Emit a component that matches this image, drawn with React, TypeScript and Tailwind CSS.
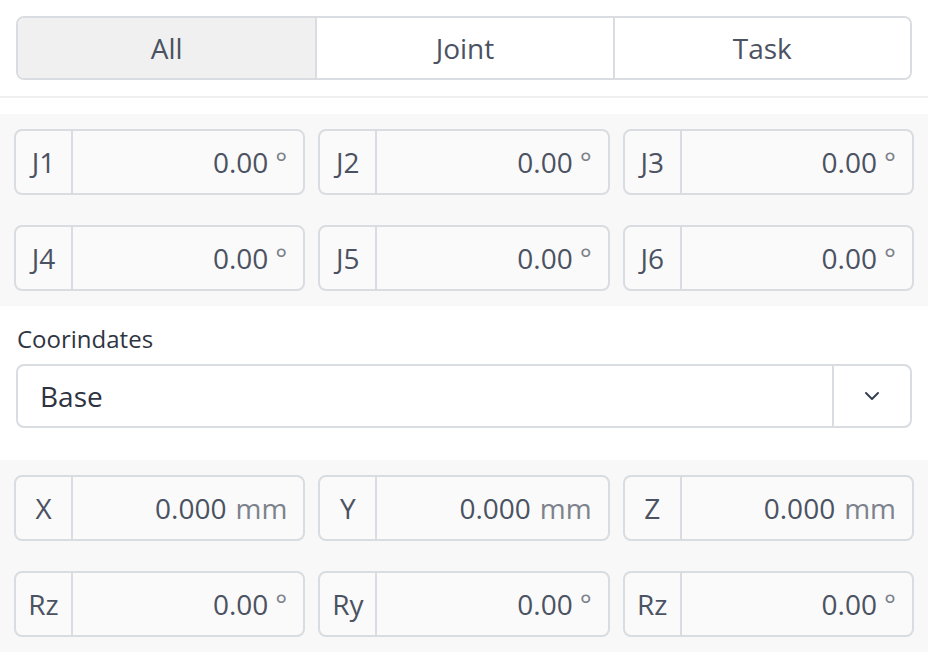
import React from "react";

type Field = { label: string; value: string; unit: string };

const joints: Field[] = [
  { label: "J1", value: "0.00", unit: "°" },
  { label: "J2", value: "0.00", unit: "°" },
  { label: "J3", value: "0.00", unit: "°" },
  { label: "J4", value: "0.00", unit: "°" },
  { label: "J5", value: "0.00", unit: "°" },
  { label: "J6", value: "0.00", unit: "°" },
];

const task: Field[] = [
  { label: "X", value: "0.000", unit: "mm" },
  { label: "Y", value: "0.000", unit: "mm" },
  { label: "Z", value: "0.000", unit: "mm" },
  { label: "Rz", value: "0.00", unit: "°" },
  { label: "Ry", value: "0.00", unit: "°" },
  { label: "Rz", value: "0.00", unit: "°" },
];

function FieldCard({ f }: { f: Field }) {
  return (
    <div className="flex h-[66px] rounded-lg border-2 border-[#d9dde1] bg-[#fafafa]">
      <div className="flex w-[57px] shrink-0 items-center justify-center border-r-2 border-[#d9dde1] text-[28px] leading-none text-[#4b5262]">
        {f.label}
      </div>
      <div className="flex flex-1 items-center justify-end pr-4 text-[28px] leading-none">
        <span className="text-[#4b5262]">{f.value}</span>
        <span className={(f.unit === "mm" ? "ml-[9px]" : "ml-[7px]") + " text-[#7d828c]"}>{f.unit}</span>
      </div>
    </div>
  );
}

function Section({ items }: { items: Field[] }) {
  return (
    <div className="grid grid-cols-3 gap-x-[13px] gap-y-[30px] bg-[#f8f8f8] px-[14px] py-[15px]">
      {items.map((f, i) => (
        <FieldCard key={i} f={f} />
      ))}
    </div>
  );
}

export default function App() {
  const tabs = ["All", "Joint", "Task"];
  return (
    <div className="h-[652px] w-[928px] overflow-hidden bg-white font-['Open_Sans',sans-serif]">
      <div className="p-4">
        <div className="grid h-16 grid-cols-3 overflow-hidden rounded-lg border-2 border-[#d9dde1]">
          {tabs.map((t, i) => (
            <div
              key={t}
              className={
                "flex items-center justify-center text-[28px] leading-none text-[#4b5262] " +
                (i === 0 ? "bg-[#f0f0f0] " : "bg-white ") +
                (i > 0 ? "border-l-2 border-[#d9dde1]" : "")
              }
            >
              {t}
            </div>
          ))}
        </div>
      </div>
      <div className="h-[2px] bg-[#efefef]" />
      <div className="h-4" />
      <Section items={joints} />
      <div className="px-4">
        <div className="pt-[17px] pb-[9px] pl-[1px] text-[24px] leading-[32px] text-[#2f3542]">Coorindates</div>
        <div className="flex h-16 rounded-lg border-2 border-[#d9dde1] bg-white">
          <div className="flex flex-1 items-center pl-[22px] text-[28px] leading-none text-[#2d3340]">Base</div>
          <div className="flex w-[78px] items-center justify-center border-l-2 border-[#d9dde1]">
            <svg width="16" height="10" viewBox="0 0 16 10" fill="none">
              <path d="M2 2l6 6 6-6" stroke="#374151" strokeWidth="2" strokeLinecap="round" strokeLinejoin="round" />
            </svg>
          </div>
        </div>
      </div>
      <div className="h-8" />
      <Section items={task} />
    </div>
  );
}
